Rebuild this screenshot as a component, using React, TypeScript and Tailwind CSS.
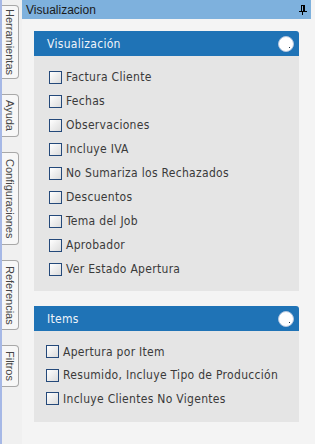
const vista = [
  'Factura Cliente',
  'Fechas',
  'Observaciones',
  'Incluye IVA',
  'No Sumariza los Rechazados',
  'Descuentos',
  'Tema del Job',
  'Aprobador',
  'Ver Estado Apertura',
];

const items = ['Apertura por Item', 'Resumido, Incluye Tipo de Producción', 'Incluye Clientes No Vigentes'];

const tabs = [
  { label: 'Herramientas', h: 'h-[74px]' },
  { label: 'Ayuda', h: 'h-[43px]' },
  { label: 'Configuraciones', h: 'h-[93px]' },
  { label: 'Referencias', h: 'h-[70px]' },
  { label: 'Filtros', h: 'h-[42px]' },
];

function Check({ label }: { label: string }) {
  return (
    <label className="flex items-center gap-[4px] h-[24px]">
      <span className="w-[13px] h-[13px] border border-[#24497a] bg-gradient-to-br from-white to-[#dcdcdc] shrink-0" />
      <span
        className="text-[12px] text-[#3a3a3a] tracking-[0.3px]"
        style={{ fontFamily: '"DejaVu Sans Condensed", "Liberation Sans", sans-serif' }}
      >
        {label}
      </span>
    </label>
  );
}

function CardHeader({ title }: { title: string }) {
  return (
    <div className="h-[25px] bg-[#1f73b6] rounded-tr-[3px] flex items-center justify-between pl-[13px] pr-[5px]">
      <span
        className="text-[12px] text-[#f0f4fa] tracking-[0.3px]"
        style={{ fontFamily: '"DejaVu Sans Condensed", "Liberation Sans", sans-serif' }}
      >
        {title}
      </span>
      <span className="relative w-[16px] h-[16px] rounded-full bg-white border border-[#b4c6de]">
        <span className="absolute right-[3px] bottom-[3px] w-[1px] h-[1px] bg-[#234]" />
      </span>
    </div>
  );
}

export default function App() {
  return (
    <div className="w-[315px] h-[444px] flex bg-[#f4f4f4] overflow-hidden" style={{ fontFamily: '"Liberation Sans", Arial, sans-serif' }}>
      {/* side tabs */}
      <div className="w-[22px] h-full bg-[#f0f0f0] border-l-[2px] border-[#a6b8e6] flex flex-col gap-[15px] pt-[5px] shrink-0">
        {tabs.map((t) => (
          <div
            key={t.label}
            className={`${t.h} w-[17px] bg-[#f7f7f7] border border-l-0 border-[#a8a8a8] rounded-r-[4px] flex items-center justify-center`}
          >
            <span className="text-[11px] text-[#444] [writing-mode:vertical-rl]">{t.label}</span>
          </div>
        ))}
      </div>

      <div className="flex-1 flex flex-col">
        <div className="h-[19px] w-[289px] bg-[#7eb1dd] flex items-center justify-between pl-[4px] pr-[4px]">
          <span className="text-[12px] text-[#1a1a1a]">Visualizacion</span>
          <svg width="8" height="10" viewBox="0 0 8 10">
            <rect x="2" y="0" width="4" height="1" fill="#000" />
            <rect x="2" y="1" width="1" height="5" fill="#000" />
            <rect x="4" y="1" width="2" height="5" fill="#000" />
            <rect x="0" y="6" width="8" height="1" fill="#000" />
            <rect x="3" y="7" width="1" height="3" fill="#000" />
          </svg>
        </div>

        <div className="pl-[12px] pt-[12px] w-[277px] flex flex-col gap-[15px]">
          <div>
            <CardHeader title="Visualización" />
            <div className="bg-[#e5e5e5] pl-[15px] pt-[9px] pb-[10px] flex flex-col">
              {vista.map((v) => (
                <Check key={v} label={v} />
              ))}
            </div>
          </div>

          <div>
            <CardHeader title="Items" />
            <div className="bg-[#e5e5e5] pl-[12px] pt-[9px] pb-[11px] flex flex-col">
              {items.map((v) => (
                <div key={v} className="h-[23.5px] flex items-center">
                  <Check label={v} />
                </div>
              ))}
            </div>
          </div>
        </div>
      </div>
    </div>
  );
}
